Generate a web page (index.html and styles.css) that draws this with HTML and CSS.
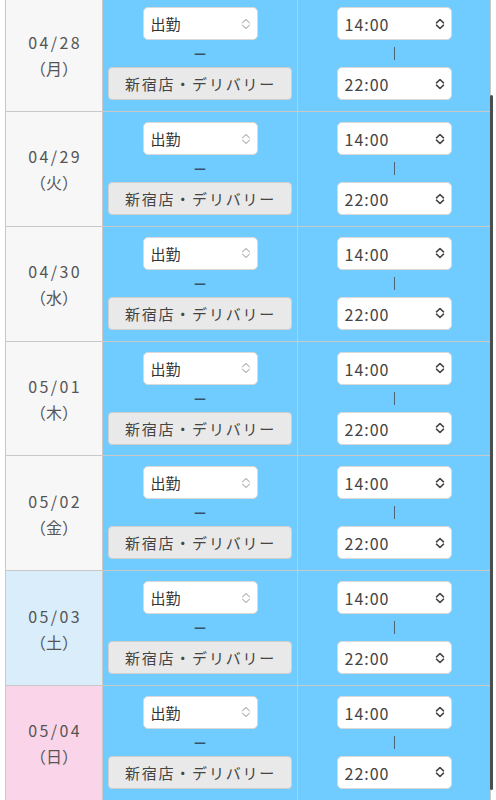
FILE: index.html
```html
<!DOCTYPE html>
<html lang="ja">
<head>
<meta charset="utf-8">
<title>シフト</title>
<link rel="stylesheet" href="styles.css">
</head>
<body>
<div class="sheet">

  <div class="row">
    <div class="date"><span class="md">04/28</span><span class="wd">（月）</span></div>
    <div class="cell kind">
      <div class="select status"><span>出勤</span><svg class="chev light" viewBox="0 0 10 12"><path d="M1.5 4.8L5 1.5L8.5 4.8M1.5 7.2L5 10.5L8.5 7.2"/></svg></div>
      <div class="mid"><span class="dash">ー</span></div>
      <div class="btn">新宿店・デリバリー</div>
    </div>
    <div class="cell time">
      <div class="select clock"><span>14:00</span><svg class="chev dark" viewBox="0 0 10 12"><path d="M1.5 4.8L5 1.5L8.5 4.8M1.5 7.2L5 10.5L8.5 7.2"/></svg></div>
      <div class="mid"><span class="vbar"></span></div>
      <div class="select clock"><span>22:00</span><svg class="chev dark" viewBox="0 0 10 12"><path d="M1.5 4.8L5 1.5L8.5 4.8M1.5 7.2L5 10.5L8.5 7.2"/></svg></div>
    </div>
  </div>

  <div class="row">
    <div class="date"><span class="md">04/29</span><span class="wd">（火）</span></div>
    <div class="cell kind">
      <div class="select status"><span>出勤</span><svg class="chev light" viewBox="0 0 10 12"><path d="M1.5 4.8L5 1.5L8.5 4.8M1.5 7.2L5 10.5L8.5 7.2"/></svg></div>
      <div class="mid"><span class="dash">ー</span></div>
      <div class="btn">新宿店・デリバリー</div>
    </div>
    <div class="cell time">
      <div class="select clock"><span>14:00</span><svg class="chev dark" viewBox="0 0 10 12"><path d="M1.5 4.8L5 1.5L8.5 4.8M1.5 7.2L5 10.5L8.5 7.2"/></svg></div>
      <div class="mid"><span class="vbar"></span></div>
      <div class="select clock"><span>22:00</span><svg class="chev dark" viewBox="0 0 10 12"><path d="M1.5 4.8L5 1.5L8.5 4.8M1.5 7.2L5 10.5L8.5 7.2"/></svg></div>
    </div>
  </div>

  <div class="row">
    <div class="date"><span class="md">04/30</span><span class="wd">（水）</span></div>
    <div class="cell kind">
      <div class="select status"><span>出勤</span><svg class="chev light" viewBox="0 0 10 12"><path d="M1.5 4.8L5 1.5L8.5 4.8M1.5 7.2L5 10.5L8.5 7.2"/></svg></div>
      <div class="mid"><span class="dash">ー</span></div>
      <div class="btn">新宿店・デリバリー</div>
    </div>
    <div class="cell time">
      <div class="select clock"><span>14:00</span><svg class="chev dark" viewBox="0 0 10 12"><path d="M1.5 4.8L5 1.5L8.5 4.8M1.5 7.2L5 10.5L8.5 7.2"/></svg></div>
      <div class="mid"><span class="vbar"></span></div>
      <div class="select clock"><span>22:00</span><svg class="chev dark" viewBox="0 0 10 12"><path d="M1.5 4.8L5 1.5L8.5 4.8M1.5 7.2L5 10.5L8.5 7.2"/></svg></div>
    </div>
  </div>

  <div class="row">
    <div class="date"><span class="md">05/01</span><span class="wd">（木）</span></div>
    <div class="cell kind">
      <div class="select status"><span>出勤</span><svg class="chev light" viewBox="0 0 10 12"><path d="M1.5 4.8L5 1.5L8.5 4.8M1.5 7.2L5 10.5L8.5 7.2"/></svg></div>
      <div class="mid"><span class="dash">ー</span></div>
      <div class="btn">新宿店・デリバリー</div>
    </div>
    <div class="cell time">
      <div class="select clock"><span>14:00</span><svg class="chev dark" viewBox="0 0 10 12"><path d="M1.5 4.8L5 1.5L8.5 4.8M1.5 7.2L5 10.5L8.5 7.2"/></svg></div>
      <div class="mid"><span class="vbar"></span></div>
      <div class="select clock"><span>22:00</span><svg class="chev dark" viewBox="0 0 10 12"><path d="M1.5 4.8L5 1.5L8.5 4.8M1.5 7.2L5 10.5L8.5 7.2"/></svg></div>
    </div>
  </div>

  <div class="row">
    <div class="date"><span class="md">05/02</span><span class="wd">（金）</span></div>
    <div class="cell kind">
      <div class="select status"><span>出勤</span><svg class="chev light" viewBox="0 0 10 12"><path d="M1.5 4.8L5 1.5L8.5 4.8M1.5 7.2L5 10.5L8.5 7.2"/></svg></div>
      <div class="mid"><span class="dash">ー</span></div>
      <div class="btn">新宿店・デリバリー</div>
    </div>
    <div class="cell time">
      <div class="select clock"><span>14:00</span><svg class="chev dark" viewBox="0 0 10 12"><path d="M1.5 4.8L5 1.5L8.5 4.8M1.5 7.2L5 10.5L8.5 7.2"/></svg></div>
      <div class="mid"><span class="vbar"></span></div>
      <div class="select clock"><span>22:00</span><svg class="chev dark" viewBox="0 0 10 12"><path d="M1.5 4.8L5 1.5L8.5 4.8M1.5 7.2L5 10.5L8.5 7.2"/></svg></div>
    </div>
  </div>

  <div class="row">
    <div class="date sat"><span class="md">05/03</span><span class="wd">（土）</span></div>
    <div class="cell kind">
      <div class="select status"><span>出勤</span><svg class="chev light" viewBox="0 0 10 12"><path d="M1.5 4.8L5 1.5L8.5 4.8M1.5 7.2L5 10.5L8.5 7.2"/></svg></div>
      <div class="mid"><span class="dash">ー</span></div>
      <div class="btn">新宿店・デリバリー</div>
    </div>
    <div class="cell time">
      <div class="select clock"><span>14:00</span><svg class="chev dark" viewBox="0 0 10 12"><path d="M1.5 4.8L5 1.5L8.5 4.8M1.5 7.2L5 10.5L8.5 7.2"/></svg></div>
      <div class="mid"><span class="vbar"></span></div>
      <div class="select clock"><span>22:00</span><svg class="chev dark" viewBox="0 0 10 12"><path d="M1.5 4.8L5 1.5L8.5 4.8M1.5 7.2L5 10.5L8.5 7.2"/></svg></div>
    </div>
  </div>

  <div class="row">
    <div class="date sun"><span class="md">05/04</span><span class="wd">（日）</span></div>
    <div class="cell kind">
      <div class="select status"><span>出勤</span><svg class="chev light" viewBox="0 0 10 12"><path d="M1.5 4.8L5 1.5L8.5 4.8M1.5 7.2L5 10.5L8.5 7.2"/></svg></div>
      <div class="mid"><span class="dash">ー</span></div>
      <div class="btn">新宿店・デリバリー</div>
    </div>
    <div class="cell time">
      <div class="select clock"><span>14:00</span><svg class="chev dark" viewBox="0 0 10 12"><path d="M1.5 4.8L5 1.5L8.5 4.8M1.5 7.2L5 10.5L8.5 7.2"/></svg></div>
      <div class="mid"><span class="vbar"></span></div>
      <div class="select clock"><span>22:00</span><svg class="chev dark" viewBox="0 0 10 12"><path d="M1.5 4.8L5 1.5L8.5 4.8M1.5 7.2L5 10.5L8.5 7.2"/></svg></div>
    </div>
  </div>

</div>
<div class="scroll-thumb"></div>
</body>
</html>
```

FILE: styles.css
```css
html, body {
  margin: 0;
  padding: 0;
  background: #ffffff;
  overflow: hidden;
}

body {
  font-family: "Noto Sans CJK JP", sans-serif;
  color: #333333;
}

.sheet {
  margin: -2.8px 5px 0 5px;
  border-left: 1px solid #c9c9c9;
  border-right: 1px solid #c9c9c9;
}

.row {
  display: grid;
  grid-template-columns: 96px 195px 1fr;
  border-bottom: 1px solid #c9c9c9;
}

.date {
  background: #f7f7f7;
  display: flex;
  flex-direction: column;
  align-items: center;
  justify-content: center;
  color: #555555;
  font-size: 16px;
  line-height: 26px;
  padding-top: 1px;
}

.md {
  letter-spacing: 2.4px;
  margin-right: -2.4px;
}

.date.sat { background: #d9edfa; }
.date.sun { background: #fad5e9; }

.cell {
  background: #70cbfe;
  border-left: 1px solid #c9c9c9;
  display: flex;
  flex-direction: column;
  align-items: center;
  padding: 10px 5px 10.8px 5px;
}

.select {
  box-sizing: border-box;
  width: 115px;
  height: 33px;
  background: #ffffff;
  border: 1px solid #d9d9d9;
  border-radius: 5px;
  display: flex;
  align-items: center;
  justify-content: space-between;
  padding: 0 6px 0 7px;
  font-size: 15px;
  color: #333333;
}

.clock span {
  font-size: 16px;
  letter-spacing: 1px;
  color: #444444;
  padding-top: 1px;
}

.chev {
  width: 10px;
  height: 12px;
  fill: none;
  stroke-linecap: round;
  stroke-linejoin: round;
}

.chev.light {
  stroke: #b9b9b9;
  stroke-width: 1.1;
}

.chev.dark {
  stroke: #454545;
  stroke-width: 1.6;
}

.mid {
  height: 27px;
  display: flex;
  align-items: center;
  justify-content: center;
}

.dash {
  font-size: 13px;
  line-height: 1;
  color: #34506a;
  font-weight: 500;
}

.vbar {
  width: 1px;
  height: 13px;
  background: #4a6378;
}

.btn {
  box-sizing: border-box;
  width: 100%;
  height: 33px;
  background: #e9e9e9;
  border: 1px solid #cfcfcf;
  border-radius: 4px;
  display: flex;
  align-items: center;
  justify-content: center;
  font-size: 15px;
  letter-spacing: 1.8px;
  color: #444444;
  padding-left: 1px;
}

.scroll-thumb {
  position: fixed;
  left: 490px;
  top: 95px;
  width: 2.5px;
  height: 695px;
  border-radius: 2px;
  background: #4d4d4d;
}
```
